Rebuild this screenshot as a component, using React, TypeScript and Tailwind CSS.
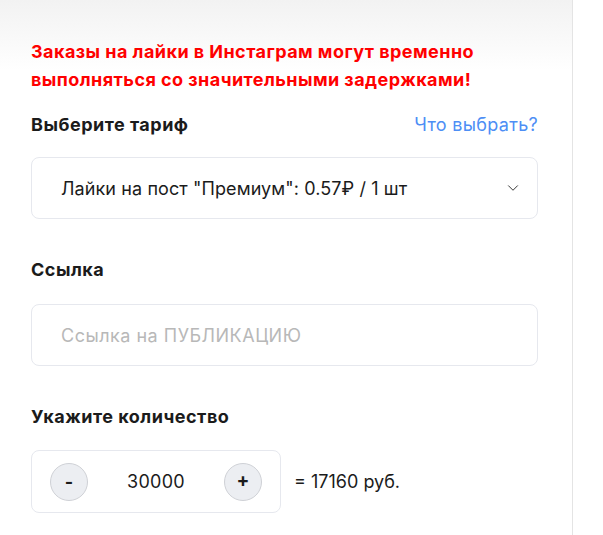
import { ChevronDown } from "lucide-react";

const font = { fontFamily: 'Inter, "Noto Sans", sans-serif' };

export default function App() {
  return (
    <div
      className="flex h-[535px] w-[603px] overflow-hidden bg-[linear-gradient(to_bottom,#f2f2f2,#ffffff_70px)] text-[#1b1b1b]"
      style={font}
    >
      <div className="w-[573px] shrink-0 border-r border-[#e4e4e4]">
        <div className="w-[507px] pl-[31px] pt-[38px] box-content">
          <p className="text-[18px] font-bold leading-[28px] tracking-[0.45px] text-[#ff0000]">
            Заказы на лайки в Инстаграм могут временно выполняться со значительными задержками!
          </p>

          <div className="mt-[19px] flex items-center justify-between">
            <span className="text-[18px] font-bold leading-[24px] tracking-[0.5px]">Выберите тариф</span>
            <span className="text-[18px] leading-[24px] tracking-[0.3px] text-[#4d8ef5]">Что выбрать?</span>
          </div>
          <div className="mt-[20px] flex h-[62px] items-center justify-between rounded-[8px] border border-[#e6e8ee] bg-white pl-[29px] pr-[15px]">
            <span className="text-[18px] tracking-[0.1px]">Лайки на пост "Премиум": 0.57₽ / 1 шт</span>
            <ChevronDown className="h-[18px] w-[18px] text-[#333]" strokeWidth={1.3} />
          </div>

          <div className="mt-[39px] text-[18px] font-bold leading-[24px] tracking-[0.5px]">Ссылка</div>
          <div className="mt-[22px] flex h-[62px] items-center rounded-[8px] border border-[#e6e8ee] bg-white pl-[29px]">
            <span className="text-[18px] tracking-[0.5px] text-[#b8b8b8]">Ссылка на ПУБЛИКАЦИЮ</span>
          </div>

          <div className="mt-[39px] text-[18px] font-bold leading-[24px] tracking-[0.5px]">Укажите количество</div>
          <div className="mt-[21px] flex items-center gap-[13px]">
            <div className="flex h-[63px] w-[250px] items-center justify-between rounded-[8px] border border-[#e6e8ee] bg-white px-[18px]">
              <button className="flex h-[38px] w-[38px] items-center justify-center rounded-full border border-[#cfd1d6] bg-[#eceef2] text-[18px] font-bold">
                -
              </button>
              <span className="text-[18px] tracking-[0.3px]">30000</span>
              <button className="flex h-[38px] w-[38px] items-center justify-center rounded-full border border-[#cfd1d6] bg-[#eceef2] text-[19px] font-bold">
                +
              </button>
            </div>
            <span className="text-[18px]">= 17160 руб.</span>
          </div>
        </div>
      </div>
      <div className="flex-1 bg-white" />
    </div>
  );
}
